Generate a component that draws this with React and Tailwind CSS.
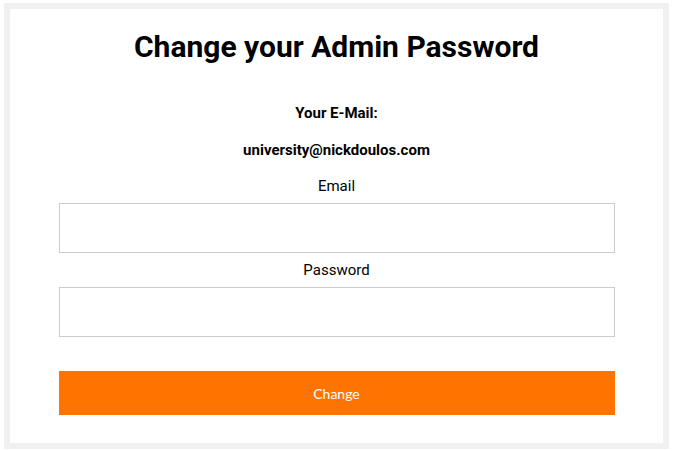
export default function App() {
  return (
    <div className="pt-[3px] px-[4px] bg-white" style={{ fontFamily: "Roboto, 'Liberation Sans', sans-serif" }}>
      <div className="border-[6px] border-[#f0f0f0] bg-white h-[446px]">
        <div className="w-[556px] mx-auto pt-[20px] flex flex-col items-center text-black">
          <h1 className="text-[30px] leading-[36px] font-bold">Change your Admin Password</h1>
          <p className="mt-[38px] text-[15px] leading-[20px] font-bold">Your E-Mail:</p>
          <p className="mt-[17px] text-[15px] leading-[20px] font-bold">university@nickdoulos.com</p>
          <label className="mt-[16px] text-[15px] leading-[20px]">Email</label>
          <input type="email" className="mt-[7px] w-full h-[50px] border border-[#cccccc] outline-none px-3" />
          <label className="mt-[7px] text-[15px] leading-[20px]">Password</label>
          <input type="password" className="mt-[7px] w-full h-[50px] border border-[#cccccc] outline-none px-3" />
          <button
            className="mt-[34px] w-full h-[44px] bg-[#ff7400] text-white text-[14px]"
            style={{ fontFamily: "Lato, 'Open Sans', sans-serif" }}
          >
            Change
          </button>
        </div>
      </div>
    </div>
  );
}
